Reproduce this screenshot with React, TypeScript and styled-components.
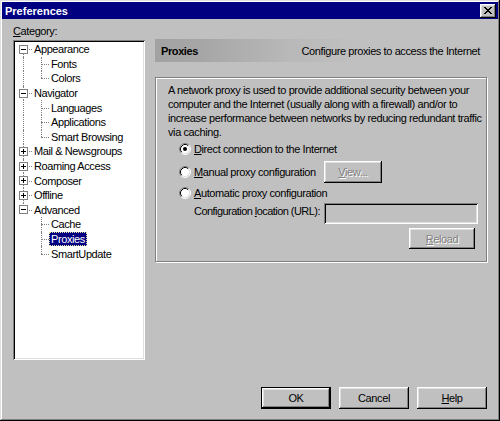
import React from 'react';
import styled, { createGlobalStyle, css } from 'styled-components';

const GlobalStyle = createGlobalStyle`
  html, body { margin: 0; padding: 0; background: #c0c0c0; }
  body {
    font-family: "Liberation Sans", Arial, sans-serif;
    font-size: 11px;
    letter-spacing: -0.4px;
    color: #000;
  }
  * { box-sizing: border-box; }
`;

const raised = css`
  box-shadow: inset -1px -1px 0 #000, inset 1px 1px 0 #fff, inset -2px -2px 0 #808080, inset 2px 2px 0 #dfdfdf;
`;
const sunken = css`
  box-shadow: inset 1px 1px 0 #808080, inset -1px -1px 0 #fff, inset 2px 2px 0 #000, inset -2px -2px 0 #dfdfdf;
`;

const Window = styled.div`
  width: 500px;
  height: 421px;
  padding: 2px;
  display: flex;
  flex-direction: column;
  background: #c0c0c0;
  box-shadow: inset -1px -1px 0 #000, inset 1px 1px 0 #dfdfdf, inset -2px -2px 0 #808080, inset 2px 2px 0 #fff;
`;

const TitleBar = styled.div`
  height: 17px;
  flex-shrink: 0;
  background: #000080;
  color: #fff;
  display: flex;
  align-items: center;
  justify-content: space-between;
  padding: 0 2px 0 3px;
`;

const Title = styled.span`
  font-weight: bold;
  font-size: 11px;
  letter-spacing: 0;
`;

const CloseButton = styled.button`
  width: 16px;
  height: 14px;
  padding: 0;
  border: none;
  background: #c0c0c0;
  display: flex;
  align-items: center;
  justify-content: center;
  ${raised}
`;

const Body = styled.div`
  flex: 1;
  display: flex;
  flex-direction: column;
  padding: 6px 11px 10px 11px;
`;

const MainRow = styled.div`
  display: flex;
  gap: 10px;
  align-items: flex-start;
`;

const LeftColumn = styled.div`
  width: 132px;
  display: flex;
  flex-direction: column;
`;

const FieldLabel = styled.div`
  height: 13px;
  line-height: 13px;
  margin-bottom: 2px;
`;

const TreeBox = styled.div`
  height: 320px;
  background: #fff;
  padding: 2px;
  overflow: hidden;
  ${sunken}
`;

const TreeRow = styled.div`
  height: 14.6px;
  display: flex;
  align-items: center;
`;

const Connector = styled.span<{ $w: number; $x: number; $up?: boolean; $down?: boolean; $across?: boolean }>`
  position: relative;
  width: ${p => p.$w}px;
  height: 100%;
  flex-shrink: 0;
  display: flex;
  align-items: center;
  padding-left: ${p => p.$x - 4}px;
  ${p =>
    (p.$up || p.$down) &&
    css`
      &::before {
        content: '';
        position: absolute;
        left: ${p.$x}px;
        top: ${p.$up ? '0' : '50%'};
        bottom: ${p.$down ? '0' : '50%'};
        border-left: 1px dotted #808080;
      }
    `}
  ${p =>
    p.$across &&
    css`
      &::after {
        content: '';
        position: absolute;
        left: ${p.$x}px;
        right: 0;
        top: 50%;
        border-top: 1px dotted #808080;
      }
    `}
`;

const ToggleBox = styled.span<{ $open: boolean }>`
  position: relative;
  z-index: 1;
  width: 9px;
  height: 9px;
  border: 1px solid #808080;
  background: #fff;
  &::before {
    content: '';
    position: absolute;
    left: 1px;
    top: 3px;
    width: 5px;
    height: 1px;
    background: #000;
  }
  ${p =>
    !p.$open &&
    css`
      &::after {
        content: '';
        position: absolute;
        left: 3px;
        top: 1px;
        width: 1px;
        height: 5px;
        background: #000;
      }
    `}
`;

const NodeLabel = styled.span<{ $selected?: boolean }>`
  padding: 0 2px;
  height: 14px;
  line-height: 14px;
  white-space: nowrap;
  ${p =>
    p.$selected &&
    css`
      background: #000080;
      color: #fff;
      outline: 1px dotted #e0e0a0;
      outline-offset: -1px;
    `}
`;

const RightColumn = styled.div`
  width: 332px;
  padding-top: 14px;
  display: flex;
  flex-direction: column;
`;

const PanelHeader = styled.div`
  height: 23px;
  display: flex;
  align-items: center;
  justify-content: space-between;
  padding: 0 7px 0 6px;
  background: linear-gradient(to right, #a2a2a2 0%, #a6a6a6 14%, #b8b8b8 40%, #c0c0c0 62%);
`;

const HeaderTitle = styled.span`
  font-weight: bold;
`;

const GroupBox = styled.div`
  margin-top: 15px;
  height: 185px;
  border: 1px solid #808080;
  box-shadow: inset 1px 1px 0 #fff, 1px 1px 0 #fff;
  padding: 5px 8px 0 12px;
  display: flex;
  flex-direction: column;
`;

const Paragraph = styled.p`
  margin: 0;
  line-height: 14px;
  white-space: nowrap;
`;

const Options = styled.div`
  margin-left: 11px;
  display: flex;
  flex-direction: column;
`;

const OptionRow = styled.div<{ $mt: number }>`
  display: flex;
  align-items: center;
  min-height: 14px;
  margin-top: ${p => p.$mt}px;
`;

const RadioLabel = styled.label`
  flex: 0 0 145px;
  display: flex;
  align-items: center;
  gap: 3px;
  white-space: nowrap;
`;

const RadioSvg = styled.svg`
  flex-shrink: 0;
  width: 12px;
  height: 12px;
`;

const PlainLabel = styled.span`
  flex: 0 0 145px;
  padding-left: 15px;
  padding-bottom: 5px;
  white-space: nowrap;
  letter-spacing: -0.55px;
`;

const ControlCell = styled.div<{ $align: 'flex-start' | 'flex-end' }>`
  flex: 0 0 154px;
  display: flex;
  justify-content: ${p => p.$align};
`;

const Button = styled.button<{ $w: number; $h: number; $default?: boolean; $mr?: number }>`
  width: ${p => p.$w}px;
  height: ${p => p.$h}px;
  margin-right: ${p => p.$mr ?? 0}px;
  padding: 0;
  border: none;
  background: #c0c0c0;
  color: #000;
  font-family: inherit;
  font-size: 11px;
  letter-spacing: -0.4px;
  ${raised}
  ${p =>
    p.$default &&
    css`
      box-shadow: inset 0 0 0 1px #000, inset -2px -2px 0 #000, inset 2px 2px 0 #fff, inset -3px -3px 0 #808080, inset 3px 3px 0 #dfdfdf;
    `}
  &:disabled {
    color: #808080;
    text-shadow: 1px 1px 0 #fff;
  }
`;

const TextField = styled.input`
  width: 154px;
  height: 21px;
  border: none;
  background: #c0c0c0;
  ${sunken}
`;

const ButtonRow = styled.div`
  margin-top: 27px;
  display: flex;
  justify-content: flex-end;
  gap: 8px;
`;

const CloseGlyph = () => (
  <svg width="8" height="7" viewBox="0 0 8 7" shapeRendering="crispEdges">
    <path
      d="M0 0h2v1H0zM6 0h2v1H6zM1 1h2v1H1zM5 1h2v1H5zM2 2h4v1H2zM3 3h2v1H3zM2 4h4v1H2zM1 5h2v1H1zM5 5h2v1H5zM0 6h2v1H0zM6 6h2v1H6z"
      fill="#000"
    />
  </svg>
);

const RadioIcon = ({ checked }: { checked?: boolean }) => (
  <RadioSvg viewBox="0 0 12 12">
    <circle cx="6" cy="6" r="5" fill="#fff" />
    <path d="M2.11 9.89A5.5 5.5 0 0 1 9.89 2.11" fill="none" stroke="#808080" />
    <path d="M9.89 2.11A5.5 5.5 0 0 1 2.11 9.89" fill="none" stroke="#fff" />
    <path d="M2.82 9.18A4.5 4.5 0 0 1 9.18 2.82" fill="none" stroke="#000" />
    <path d="M9.18 2.82A4.5 4.5 0 0 1 2.82 9.18" fill="none" stroke="#dfdfdf" />
    {checked && <circle cx="6" cy="6" r="2" fill="#000" />}
  </RadioSvg>
);

type Node = { label: string; open: boolean; children?: string[] };

const tree: Node[] = [
  { label: 'Appearance', open: true, children: ['Fonts', 'Colors'] },
  { label: 'Navigator', open: true, children: ['Languages', 'Applications', 'Smart Browsing'] },
  { label: 'Mail & Newsgroups', open: false },
  { label: 'Roaming Access', open: false },
  { label: 'Composer', open: false },
  { label: 'Offline', open: false },
  { label: 'Advanced', open: true, children: ['Cache', 'Proxies', 'SmartUpdate'] },
];

const SELECTED = 'Proxies';

const Tree = () => {
  const rows: React.ReactNode[] = [];
  tree.forEach((node, i) => {
    const lastRoot = i === tree.length - 1;
    rows.push(
      <TreeRow key={node.label}>
        <Connector $w={17} $x={8} $up={i > 0} $down={!lastRoot} $across>
          <ToggleBox $open={node.open} />
        </Connector>
        <NodeLabel>{node.label}</NodeLabel>
      </TreeRow>
    );
    if (node.open && node.children) {
      node.children.forEach((child, j) => {
        const lastChild = j === node.children!.length - 1;
        rows.push(
          <TreeRow key={node.label + child}>
            <Connector $w={17} $x={8} $up={!lastRoot} $down={!lastRoot} />
            <Connector $w={17} $x={9} $up $down={!lastChild} $across />
            <NodeLabel $selected={child === SELECTED}>{child}</NodeLabel>
          </TreeRow>
        );
      });
    }
  });
  return <TreeBox>{rows}</TreeBox>;
};

export default function App() {
  return (
    <>
      <GlobalStyle />
      <Window>
        <TitleBar>
          <Title>Preferences</Title>
          <CloseButton aria-label="Close">
            <CloseGlyph />
          </CloseButton>
        </TitleBar>
        <Body>
          <MainRow>
            <LeftColumn>
              <FieldLabel>
                <u>C</u>ategory:
              </FieldLabel>
              <Tree />
            </LeftColumn>
            <RightColumn>
              <PanelHeader>
                <HeaderTitle>Proxies</HeaderTitle>
                <span>Configure proxies to access the Internet</span>
              </PanelHeader>
              <GroupBox>
                <Paragraph>
                  A network proxy is used to provide additional security between your
                  <br />
                  computer and the Internet (usually along with a firewall) and/or to
                  <br />
                  increase performance between networks by reducing redundant traffic
                  <br />
                  via caching.
                </Paragraph>
                <Options>
                  <OptionRow $mt={3}>
                    <RadioLabel>
                      <RadioIcon checked />
                      <span>
                        <u>D</u>irect connection to the Internet
                      </span>
                    </RadioLabel>
                  </OptionRow>
                  <OptionRow $mt={5}>
                    <RadioLabel>
                      <RadioIcon />
                      <span>
                        <u>M</u>anual proxy configuration
                      </span>
                    </RadioLabel>
                    <ControlCell $align="flex-start">
                      <Button $w={58} $h={22} disabled>
                        <u>V</u>iew...
                      </Button>
                    </ControlCell>
                  </OptionRow>
                  <OptionRow $mt={3}>
                    <RadioLabel>
                      <RadioIcon />
                      <span>
                        <u>A</u>utomatic proxy configuration
                      </span>
                    </RadioLabel>
                  </OptionRow>
                  <OptionRow $mt={3}>
                    <PlainLabel>
                      Configuration <u>l</u>ocation (URL):
                    </PlainLabel>
                    <ControlCell $align="flex-start">
                      <TextField disabled />
                    </ControlCell>
                  </OptionRow>
                  <OptionRow $mt={4}>
                    <PlainLabel />
                    <ControlCell $align="flex-end">
                      <Button $w={66} $h={21} $mr={3} disabled>
                        <u>R</u>eload
                      </Button>
                    </ControlCell>
                  </OptionRow>
                </Options>
              </GroupBox>
            </RightColumn>
          </MainRow>
          <ButtonRow>
            <Button $w={70} $h={22} $default>
              OK
            </Button>
            <Button $w={70} $h={22}>
              Cancel
            </Button>
            <Button $w={70} $h={22}>
              <u>H</u>elp
            </Button>
          </ButtonRow>
        </Body>
      </Window>
    </>
  );
}
